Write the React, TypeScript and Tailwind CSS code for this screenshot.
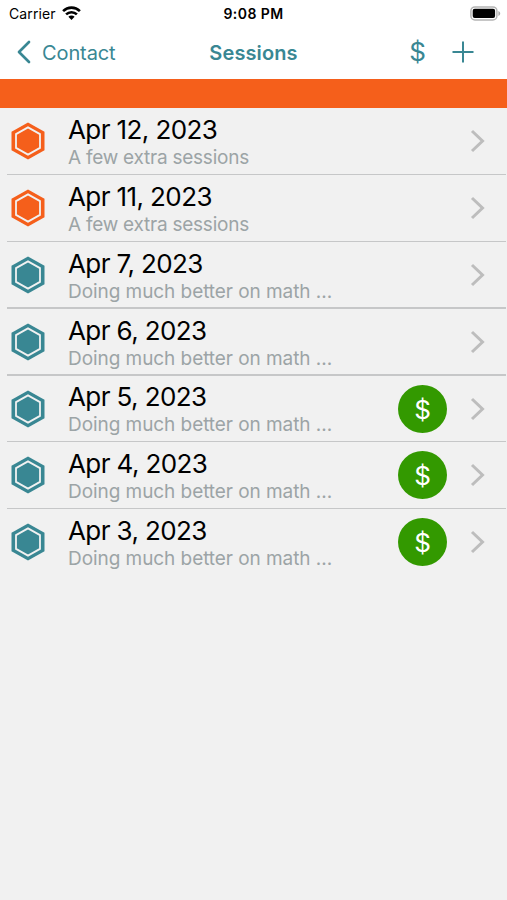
import React from 'react';

interface Session {
  date: string;
  note: string;
  upcoming?: boolean;
  paid?: boolean;
}

const sessions: Session[] = [
  { date: 'Apr 12, 2023', note: 'A few extra sessions', upcoming: true },
  { date: 'Apr 11, 2023', note: 'A few extra sessions', upcoming: true },
  { date: 'Apr 7, 2023', note: 'Doing much better on math ...' },
  { date: 'Apr 6, 2023', note: 'Doing much better on math ...' },
  { date: 'Apr 5, 2023', note: 'Doing much better on math ...', paid: true },
  { date: 'Apr 4, 2023', note: 'Doing much better on math ...', paid: true },
  { date: 'Apr 3, 2023', note: 'Doing much better on math ...', paid: true },
];

const WifiIcon = () => (
  <svg width="19" height="15" viewBox="0 0 19 15" fill="none" stroke="#000" strokeWidth="2.6">
    <path d="M1.1 5.1a12 12 0 0 1 16.8 0" />
    <path d="M4.1 8.4a7.7 7.7 0 0 1 10.8 0" />
    <path d="M9.5 14 6.4 10.8a4.4 4.4 0 0 1 6.2 0z" fill="#000" stroke="none" />
  </svg>
);

const BatteryIcon = () => (
  <svg width="31" height="15" viewBox="0 0 31 15">
    <rect x="0.9" y="0.9" width="26" height="13" rx="4" fill="#fff" stroke="#b4b4b4" strokeWidth="1.5" />
    <rect x="2.7" y="2.7" width="22.4" height="9.4" rx="2" fill="#000" />
    <path d="M28.4 5v5c1.1-.4 1.8-1.4 1.8-2.5S29.5 5.4 28.4 5z" fill="#a8a8a8" />
  </svg>
);

const Hexagon = ({ className }: { className: string }) => (
  <svg width="34" height="38" viewBox="0 0 34 38" className={className}>
    <path d="M17 .6 33.5 9.8v18.4L17 37.4.5 28.2V9.8z" fill="currentColor" />
    <path d="M17 5.4 29 12.1v13.8L17 32.6 5 25.9V12.1z" fill="none" stroke="#f1f1f1" strokeWidth="1.8" />
  </svg>
);

const SessionRow = ({ session, last }: { session: Session; last: boolean }) => (
  <li className="relative flex h-[66.8px] items-center pl-[11px] pr-[21px]">
    <Hexagon className={session.upcoming ? 'shrink-0 text-[#f55f1b]' : 'shrink-0 text-[#398793]'} />
    <div className="ml-[23px] flex-1 whitespace-nowrap pt-[2.6px]">
      <p className="text-[26px] leading-[30px] tracking-[-0.6px] text-black">{session.date}</p>
      <p className={`text-[19px] leading-[25px] text-[#9ca4a6] ${session.upcoming ? 'tracking-[-0.24px]' : 'tracking-[-0.06px]'}`}>
        {session.note}
      </p>
    </div>
    {session.paid && (
      <div className="mr-[22px] flex h-12 w-[49px] items-center justify-center rounded-[50%] bg-[#339900] pt-px text-[26px] text-white">
        $
      </div>
    )}
    <svg width="17" height="24" viewBox="0 0 17 24" fill="none" stroke="#bdbdbd" strokeWidth="3">
      <path d="M3 2 13.5 12 3 22" />
    </svg>
    {!last && <div className="absolute -bottom-[0.5px] left-[7px] right-px h-[1.5px] bg-[#c6c7c8]" />}
  </li>
);

const App: React.FC = () => (
  <div className="min-h-screen w-full bg-[#f1f1f1] font-['Inter',sans-serif]">
    {/* Status bar */}
    <div className="grid h-[26px] grid-cols-3 items-center bg-white pl-[9px] pr-[6px] text-[14px] text-black">
      <div className="flex items-center gap-1.5">
        <span className="tracking-[0.1px]">Carrier</span>
        <WifiIcon />
      </div>
      <span className="pr-[3px] text-center font-semibold tracking-[0.45px]">9:08 PM</span>
      <div className="flex justify-end">
        <BatteryIcon />
      </div>
    </div>

    {/* Navigation */}
    <header className="grid h-[53px] grid-cols-3 items-center bg-white pl-4 pr-[33px] text-[#398793]">
      <button className="flex items-center gap-[10px] text-[20px] tracking-[-0.1px]">
        <svg width="16" height="24" viewBox="0 0 16 24" fill="none" stroke="currentColor" strokeWidth="2.7" strokeLinecap="round" strokeLinejoin="round" className="-mt-0.5">
          <path d="M13 2 3 12l10 10" />
        </svg>
        Contact
      </button>
      <h1 className="pl-[17px] text-center text-[20px] font-semibold tracking-[0.1px]">Sessions</h1>
      <div className="-mt-0.5 flex items-center justify-end gap-[26px]">
        <span className="text-[26px] leading-none">$</span>
        <svg width="22" height="22" viewBox="0 0 22 22" fill="none" stroke="currentColor" strokeWidth="2">
          <path d="M11 .5v21M.5 11h21" />
        </svg>
      </div>
    </header>

    <div className="h-[29px] bg-[#f55f1b]" />

    <ul>
      {sessions.map((session, index) => (
        <SessionRow key={session.date} session={session} last={index === sessions.length - 1} />
      ))}
    </ul>
  </div>
);

export default App;
